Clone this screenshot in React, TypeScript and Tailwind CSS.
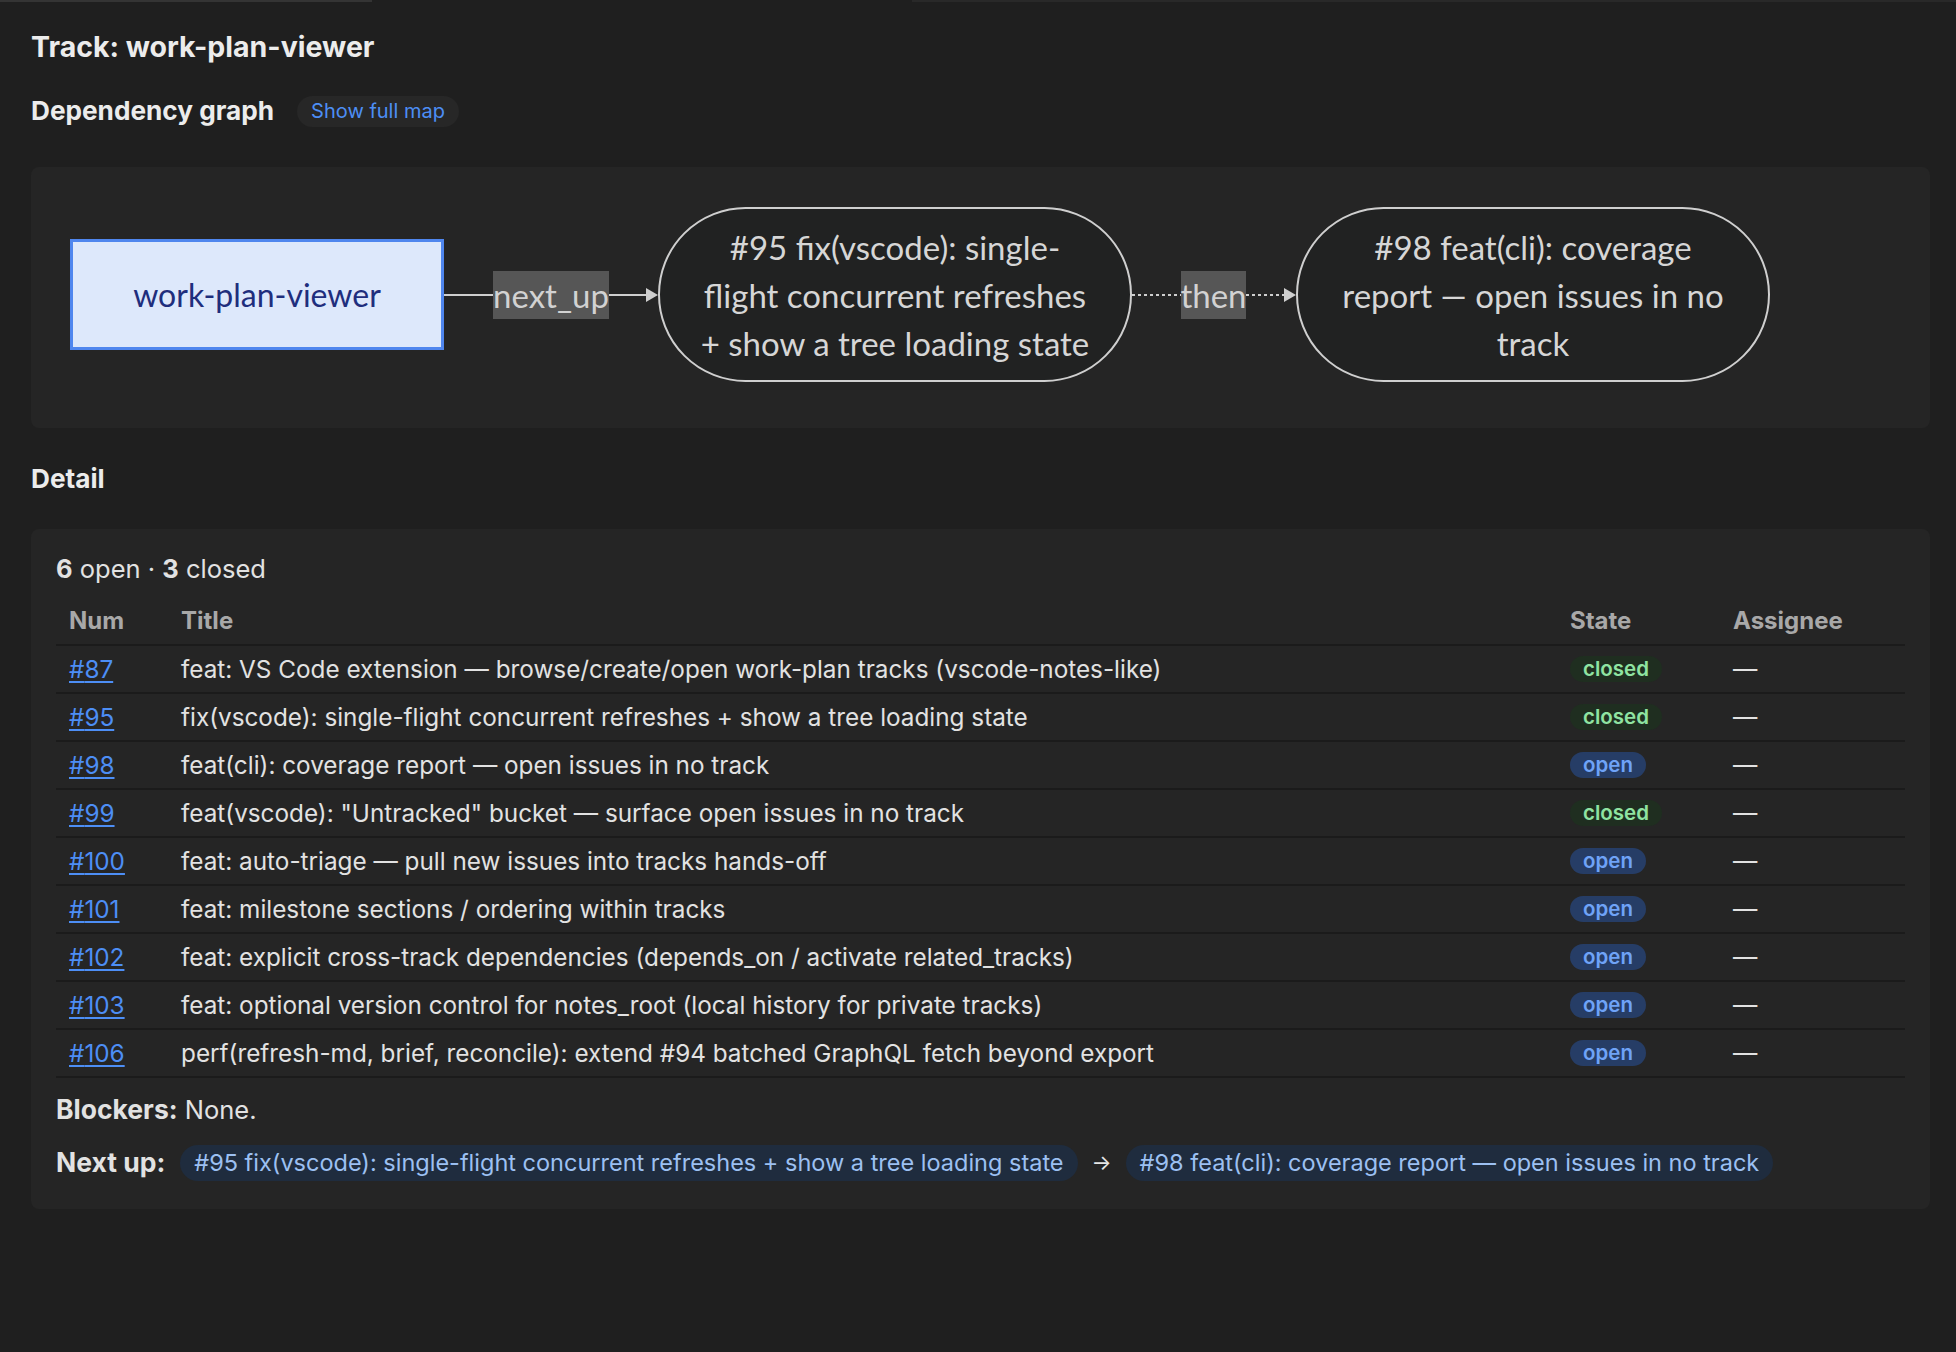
import React from 'react'

interface Issue {
  num: number
  title: string
  state: 'open' | 'closed'
}

const ISSUES: Issue[] = [
  { num: 87, title: 'feat: VS Code extension — browse/create/open work-plan tracks (vscode-notes-like)', state: 'closed' },
  { num: 95, title: 'fix(vscode): single-flight concurrent refreshes + show a tree loading state', state: 'closed' },
  { num: 98, title: 'feat(cli): coverage report — open issues in no track', state: 'open' },
  { num: 99, title: 'feat(vscode): "Untracked" bucket — surface open issues in no track', state: 'closed' },
  { num: 100, title: 'feat: auto-triage — pull new issues into tracks hands-off', state: 'open' },
  { num: 101, title: 'feat: milestone sections / ordering within tracks', state: 'open' },
  { num: 102, title: 'feat: explicit cross-track dependencies (depends_on / activate related_tracks)', state: 'open' },
  { num: 103, title: 'feat: optional version control for notes_root (local history for private tracks)', state: 'open' },
  { num: 106, title: 'perf(refresh-md, brief, reconcile): extend #94 batched GraphQL fetch beyond export', state: 'open' },
]

const NEXT_UP = [
  '#95 fix(vscode): single-flight concurrent refreshes + show a tree loading state',
  '#98 feat(cli): coverage report — open issues in no track',
]

const COLS = 'grid grid-cols-[112px_1fr_163px_185px]'

function Edge({ label, dotted, width, labelWidth }: { label: string; dotted?: boolean; width: number; labelWidth: number }) {
  const lead = 49
  const tail = width - lead - labelWidth
  return (
    <div className="flex items-center shrink-0" style={{ width }}>
      <svg width={lead} height="4" className="shrink-0">
        <line x1="0" y1="2" x2={lead} y2="2" stroke="#cfcfcf" strokeWidth="2" strokeDasharray={dotted ? '3 3' : undefined} />
      </svg>
      <div className="h-[48px] bg-[#565656] text-[#d2d2d2] text-[33px] leading-[48px] flex items-center justify-center shrink-0" style={{ width: labelWidth }}>
        {label}
      </div>
      <svg width={tail} height="16" className="shrink-0">
        <line x1="0" y1="8" x2={tail - 10} y2="8" stroke="#cfcfcf" strokeWidth="2" strokeDasharray={dotted ? '3 3' : undefined} />
        <path d={`M${tail - 12} 1 L${tail} 8 L${tail - 12} 15 Z`} fill="#cfcfcf" />
      </svg>
    </div>
  )
}

function Stadium({ lines, width }: { lines: string[]; width: number }) {
  return (
    <div
      className="h-[175px] rounded-full border-2 border-[#cfcfcf] bg-[#212222] flex flex-col items-center justify-center shrink-0 text-[#d6d6d6] text-[33px] leading-[48px]"
      style={{ width }}
    >
      {lines.map((l, i) => <span key={i} className="whitespace-nowrap">{l}</span>)}
    </div>
  )
}

function StateBadge({ state }: { state: 'open' | 'closed' }) {
  return state === 'closed'
    ? <span className="inline-flex items-center h-[26px] px-[13px] rounded-full bg-[#1f2e20] text-[#8fe3a2] text-[20.5px] font-semibold">closed</span>
    : <span className="inline-flex items-center h-[26px] px-[13px] rounded-full bg-[#263d66] text-[#6fa3f7] text-[20.5px] font-semibold">open</span>
}

export default function App() {
  return (
    <div className="min-h-screen bg-[#1f1f1f] font-['Inter','Liberation_Sans',sans-serif] text-[#e2e2e2]">
      <div className="flex h-[2px]">
        <div className="w-[372px] bg-[#343434]" />
        <div className="w-[540px]" />
        <div className="flex-1 bg-[#292929]" />
      </div>

      <div className="pl-[31px] pr-[26px] pt-[29px] pb-10">
        <h1 className="text-[28.5px] leading-[32px] font-bold text-[#ececec]">Track: work-plan-viewer</h1>

        <div className="flex items-center gap-[23px] mt-[32px] h-[32px]">
          <h2 className="text-[26.2px] leading-[32px] font-bold text-[#ececec]">Dependency graph</h2>
          <button className="h-[31px] px-[14px] rounded-full bg-[#272727] text-[#4d8ef5] text-[20px]">Show full map</button>
        </div>

        {/* graph */}
        <div className="mt-[40px] h-[261px] rounded-lg bg-[#252525] flex items-center pl-[39px] pb-[6px] font-['Lato','DejaVu_Sans',sans-serif]">
          <div className="w-[374px] h-[111px] bg-[#dde8fb] border-[3px] border-[#4f86ee] flex items-center justify-center text-[#1f2e7d] text-[32px] shrink-0">
            work-plan-viewer
          </div>
          <Edge label="next_up" width={214} labelWidth={116} />
          <Stadium width={474} lines={['#95 fix(vscode): single-', 'flight concurrent refreshes', '+ show a tree loading state']} />
          <Edge label="then" dotted width={164} labelWidth={65} />
          <Stadium width={474} lines={['#98 feat(cli): coverage', 'report — open issues in no', 'track']} />
        </div>

        <h2 className="mt-[35px] text-[26.2px] leading-[32px] font-bold text-[#ececec]">Detail</h2>

        {/* detail */}
        <div className="mt-[34px] rounded-lg bg-[#252525] px-[25px] pt-[24px] pb-[28px] text-[25.5px]">
          <p className="leading-[32px]"><b className="font-bold">6</b> open · <b className="font-bold">3</b> closed</p>

          <div className="mt-[13px] text-[24.3px]">
            <div className={`${COLS} h-[48px] items-center border-b-2 border-[#1b1b1b] font-bold text-[#a8a8a8] text-[24px]`}>
              <span className="pl-[13px]">Num</span>
              <span className="pl-[13px]">Title</span>
              <span className="pl-[13px]">State</span>
              <span className="pl-[13px]">Assignee</span>
            </div>
            {ISSUES.map(row => (
              <div key={row.num} className={`${COLS} h-[48px] items-center border-b-2 border-[#1b1b1b]`}>
                <a href="#" className="pl-[13px] text-[#4d8ef5] underline underline-offset-[3px]">#{row.num}</a>
                <span className="pl-[13px] whitespace-nowrap">{row.title}</span>
                <span className="pl-[13px] flex"><StateBadge state={row.state} /></span>
                <span className="pl-[13px]">—</span>
              </div>
            ))}
          </div>

          <p className="mt-[13px] leading-[36px]"><b className="font-bold text-[26.5px]">Blockers:</b> None.</p>

          <div className="mt-[17px] flex items-center h-[36px]">
            <b className="font-bold text-[26.5px] mr-[15px]">Next up:</b>
            <span className="h-[36px] px-[14px] rounded-full bg-[#1f2c3e] text-[#9cc0f2] text-[23.5px] flex items-center">{NEXT_UP[0]}</span>
            <span className="mx-[14px] text-[#e6e6e6] text-[21px]">→</span>
            <span className="h-[36px] px-[14px] rounded-full bg-[#1f2c3e] text-[#9cc0f2] text-[23.5px] flex items-center">{NEXT_UP[1]}</span>
          </div>
        </div>
      </div>
    </div>
  )
}
